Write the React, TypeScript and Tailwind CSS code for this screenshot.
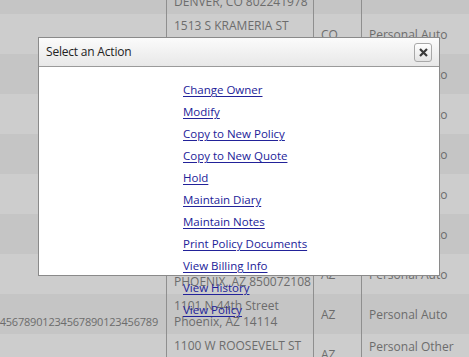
import React from 'react';

interface Row {
  id: string;
  line1: string;
  line2: string;
  state: string;
  type: string;
  type2?: string;
}

const rows: Row[] = [
  { id: '', line1: '3300 E 1ST AVE', line2: 'DENVER, CO 802241978', state: 'CO', type: 'Personal Auto' },
  { id: '', line1: '1513 S KRAMERIA ST', line2: 'DENVER, CO 80224', state: 'CO', type: 'Personal Auto' },
  { id: '', line1: '4100 E MISSISSIPPI AVE', line2: 'DENVER, CO 80246', state: 'CO', type: 'Personal Auto' },
  { id: '', line1: '200 W COLFAX AVE', line2: 'DENVER, CO 80202', state: 'CO', type: 'Personal Auto' },
  { id: '', line1: '1437 BANNOCK ST', line2: 'DENVER, CO 80202', state: 'CO', type: 'Personal Auto' },
  { id: '', line1: '2001 N CENTRAL AVE', line2: 'PHOENIX, AZ 85004', state: 'AZ', type: 'Personal Auto' },
  { id: '', line1: '3003 N CENTRAL AVE', line2: 'PHOENIX, AZ 85012', state: 'AZ', type: 'Personal Auto' },
  { id: '', line1: '1700 W WASHINGTON ST', line2: 'PHOENIX, AZ 850072108', state: 'AZ', type: 'Personal Auto' },
  {
    id: '123456789012345678901234567890123456789',
    line1: '1101 N 44th Street',
    line2: 'Phoenix, AZ 14114',
    state: 'AZ',
    type: 'Personal Auto',
  },
  { id: '', line1: '1100 W ROOSEVELT ST', line2: 'PHOENIX, AZ 85007', state: 'AZ', type: 'Personal Other', type2: 'Liability' },
];

const actions = [
  'Change Owner',
  'Modify',
  'Copy to New Policy',
  'Copy to New Quote',
  'Hold',
  'Maintain Diary',
  'Maintain Notes',
  'Print Policy Documents',
  'View Billing Info',
  'View History',
  'View Policy',
];

const font = { fontFamily: '"Open Sans", "Noto Sans", sans-serif' };

export default function App() {
  return (
    <div className="relative w-[469px] h-[357px] overflow-hidden bg-[#cdcdcd] text-[12px] text-[#6c6c6c]" style={font}>
      {/* background grid, dimmed by the modal */}
      <div className="-mt-[26px] flex flex-col">
        {rows.map((row, i) => (
          <div
            key={i}
            className={`grid h-[40px] grid-cols-[167px_147px_48px_1fr] leading-[16px] ${
              i % 2 === 0 ? 'bg-[#c5c5c5]' : 'bg-[#cdcdcd]'
            }`}
          >
            <div className="flex items-end justify-end overflow-hidden whitespace-nowrap border-r border-[#8f8f8f] pr-[8px] pb-[4px] text-[11px] tracking-[-0.2px]">
              {row.id}
            </div>
            <div className="flex flex-col justify-center whitespace-nowrap border-r border-[#8f8f8f] pl-[7px]">
              <span>{row.line1}</span>
              <span>{row.line2}</span>
            </div>
            <div className="flex items-center border-r border-[#8f8f8f] pl-[7px] pt-[2px]">{row.state}</div>
            <div className="flex flex-col justify-center whitespace-nowrap pl-[7px] pt-[2px]">
              <span>{row.type}</span>
              {row.type2 && <span>{row.type2}</span>}
            </div>
          </div>
        ))}
      </div>

      {/* Select an Action dialog */}
      <div className="absolute left-[38px] top-[37px] w-[402px] border border-[#8a8a8a] bg-white">
        <div className="flex h-[29px] items-center justify-between border-b border-[#9a9a9a] bg-gradient-to-b from-[#fbfbfb] to-[#e8e8e8] pl-[7px] pr-[7px]">
          <span className="text-[12px] tracking-[-0.2px] text-[#222]">Select an Action</span>
          <button
            className="flex h-[19px] w-[18px] items-center justify-center rounded-[3px] border border-[#a8a8a8] bg-gradient-to-b from-white to-[#e4e4e4]"
            aria-label="Close"
          >
            <svg width="9" height="9" viewBox="0 0 9 9">
              <path d="M1 1L8 8M8 1L1 8" stroke="#3a3a3a" strokeWidth="2.2" />
            </svg>
          </button>
        </div>
        <div className="h-[208px] pl-[144px] pt-[14px]">
          <ul className="flex flex-col">
            {actions.map((a) => (
              <li key={a} className="h-[22px] leading-[18px]">
                <a href="#" className="relative text-[11.5px] text-[#222299] underline underline-offset-[2px]">
                  {a}
                </a>
              </li>
            ))}
          </ul>
        </div>
      </div>
    </div>
  );
}
